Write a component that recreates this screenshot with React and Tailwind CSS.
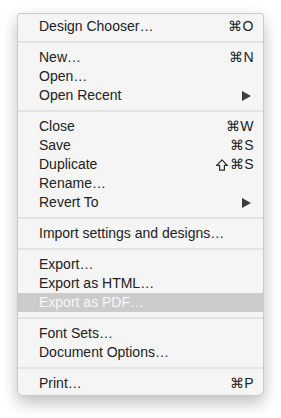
import React from "react";

const Sep = () => (
  <div className="h-[12px] flex items-center">
    <div className="h-[2px] w-full bg-[#e4e4e4]" />
  </div>
);

const Tri = () => (
  <svg width="9" height="10" viewBox="0 0 9 10" className="mr-[3px]">
    <path d="M0 0 L9 5 L0 10 Z" fill="#3c3c3c" />
  </svg>
);

const Shift = () => (
  <svg width="12" height="12" viewBox="0 0 12 12" className="mr-[2px]">
    <path
      d="M6 0.9 L11.2 6.4 L8.4 6.4 L8.4 11.2 L3.6 11.2 L3.6 6.4 L0.8 6.4 Z"
      fill="none"
      stroke="#2a2a2a"
      strokeWidth="1.2"
      strokeLinejoin="miter"
    />
  </svg>
);

const Row = ({ label, sc, shift, sub, hl }) => (
  <div
    className={
      "h-[19px] flex items-center justify-between pl-[21px] pr-[9px] " +
      (hl ? "bg-[#cbcbcb] text-[#f7f7f7]" : "text-[#222222]")
    }
  >
    <span>{label}</span>
    {sc && (
      <span className="flex items-center tracking-[0.5px]">
        {shift && <Shift />}
        <span>{sc}</span>
      </span>
    )}
    {sub && <Tri />}
  </div>
);

export default function App() {
  return (
    <div className="w-[281px] h-[418px] bg-white pt-[13px] pl-[17px]">
      <div
        className="w-[247px] h-[383px] bg-[#f5f5f5] border border-[#c9c9c9] rounded-t-[3px] rounded-b-[6px] pt-[3px] pb-[3px] shadow-[0_7px_16px_rgba(0,0,0,0.25)] text-[14px] leading-[19px]"
        style={{ fontFamily: '"Liberation Sans", Arial, sans-serif' }}
      >
        <Row label="Design Chooser…" sc="⌘O" />
        <Sep />
        <Row label="New…" sc="⌘N" />
        <Row label="Open…" />
        <Row label="Open Recent" sub />
        <Sep />
        <Row label="Close" sc="⌘W" />
        <Row label="Save" sc="⌘S" />
        <Row label="Duplicate" sc="⌘S" shift />
        <Row label="Rename…" />
        <Row label="Revert To" sub />
        <Sep />
        <Row label="Import settings and designs…" />
        <Sep />
        <Row label="Export…" />
        <Row label="Export as HTML…" />
        <Row label="Export as PDF…" hl />
        <Sep />
        <Row label="Font Sets…" />
        <Row label="Document Options…" />
        <Sep />
        <Row label="Print…" sc="⌘P" />
      </div>
    </div>
  );
}
